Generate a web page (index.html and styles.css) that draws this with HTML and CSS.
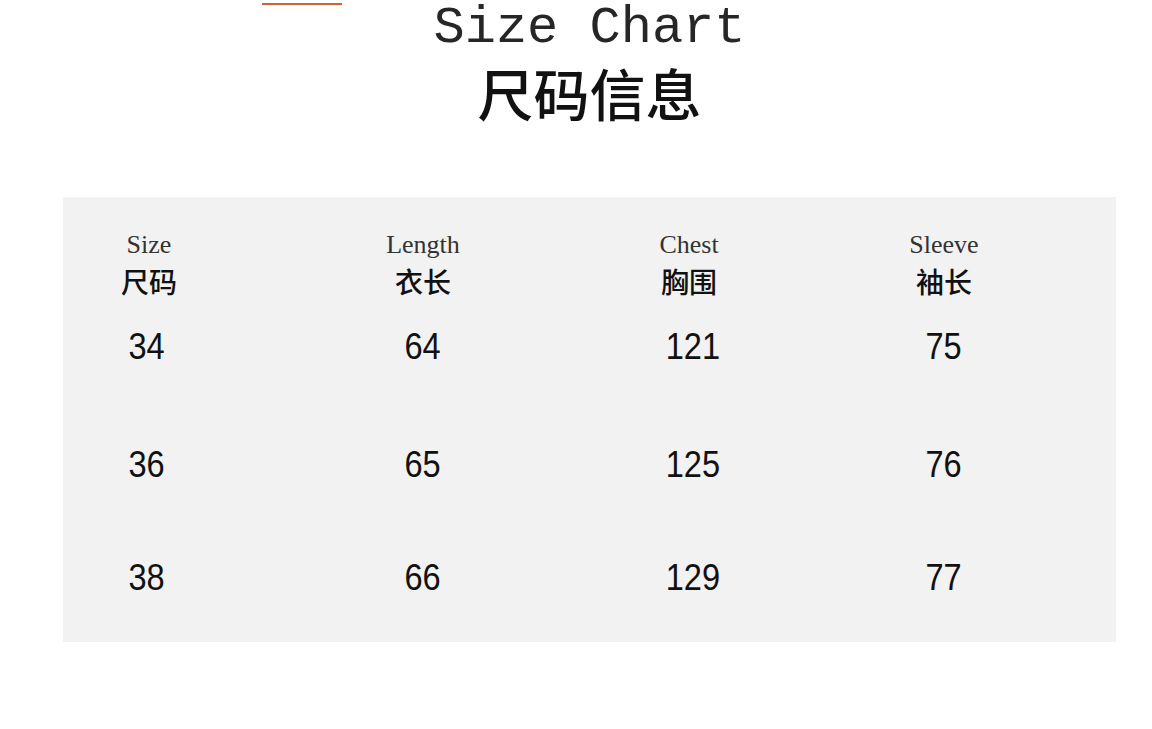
FILE: index.html
```html
<!DOCTYPE html>
<html lang="zh">
<head>
<meta charset="utf-8">
<title>Size Chart 尺码信息</title>
<link rel="stylesheet" href="styles.css">
</head>
<body>
<div class="sheet">
  <header class="heading">
    <div class="accent"></div>
    <h1 class="title-en">Size Chart</h1>
    <h2 class="title-cn">尺码信息</h2>
  </header>
  <section class="chart">
    <div class="row head">
      <div class="cell"><span class="en">Size</span><span class="cn">尺码</span></div>
      <div class="cell"><span class="en">Length</span><span class="cn">衣长</span></div>
      <div class="cell"><span class="en">Chest</span><span class="cn">胸围</span></div>
      <div class="cell"><span class="en">Sleeve</span><span class="cn">袖长</span></div>
    </div>
    <div class="row data r1">
      <div class="num"><span>34</span></div>
      <div class="num"><span>64</span></div>
      <div class="num"><span>121</span></div>
      <div class="num"><span>75</span></div>
    </div>
    <div class="row data r2">
      <div class="num"><span>36</span></div>
      <div class="num"><span>65</span></div>
      <div class="num"><span>125</span></div>
      <div class="num"><span>76</span></div>
    </div>
    <div class="row data r3">
      <div class="num"><span>38</span></div>
      <div class="num"><span>66</span></div>
      <div class="num"><span>129</span></div>
      <div class="num"><span>77</span></div>
    </div>
  </section>
</div>
</body>
</html>
```

FILE: styles.css
```css
html, body {
  margin: 0;
  padding: 0;
  background: #ffffff;
  overflow: hidden;
}

body {
  width: 1152px;
  height: 729px;
  font-family: "Liberation Sans", "Noto Sans CJK SC", sans-serif;
  color: #111;
}

.sheet {
  margin-left: 63px;
  width: 1053px;
}

.heading {
  text-align: center;
}

.accent {
  margin: 3px 0 0 199px;
  width: 80px;
  height: 2px;
  background: #d0622a;
}

.title-en {
  margin: 0;
  font-family: "Liberation Mono", "Courier New", monospace;
  font-weight: normal;
  font-size: 52px;
  line-height: 48px;
  color: #262626;
}

.title-cn {
  margin: 11px 0 0;
  font-family: "Noto Sans CJK SC", "Noto Sans", sans-serif;
  font-weight: 500;
  font-size: 56px;
  line-height: 56px;
  color: #111;
}

.chart {
  margin-top: 77px;
  background: #f2f2f2;
  padding: 33px 0 44px;
}

.row {
  display: grid;
  grid-template-columns: 172px 376px 156px 354px;
  text-align: center;
}

.cell {
  display: flex;
  flex-direction: column;
  align-items: center;
}

.en {
  font-family: "Liberation Serif", "Times New Roman", serif;
  font-size: 26px;
  line-height: 30px;
  color: #333;
}

.cn {
  margin-top: 4px;
  font-family: "Noto Sans CJK SC", sans-serif;
  font-weight: 500;
  font-size: 28px;
  line-height: 34px;
  color: #111;
}

.num {
  font-family: "Liberation Sans", Arial, sans-serif;
  font-size: 37px;
  line-height: 40px;
  color: #111;
}

.num span {
  display: inline-block;
  transform: scaleX(0.88);
}

.num:first-child {
  padding-right: 4px;
}

.num:nth-child(3) {
  padding-left: 8px;
}

.r1 {
  margin-top: 29px;
}

.r2 {
  margin-top: 78px;
}

.r3 {
  margin-top: 73px;
}
```
